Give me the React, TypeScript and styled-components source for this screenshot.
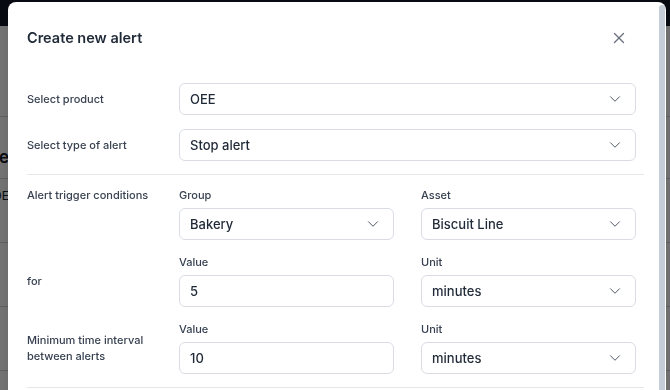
import React from 'react';
import styled, { createGlobalStyle } from 'styled-components';
import { ChevronDown, X } from 'lucide-react';

const GlobalStyle = createGlobalStyle`
  html, body {
    margin: 0;
    padding: 0;
    height: 100%;
    overflow: hidden;
    background: #ffffff;
    font-family: Inter, "Noto Sans", sans-serif;
  }
`;

const Page = styled.div`
  height: 390px;
  display: flex;
  flex-direction: column;
`;

const Navbar = styled.div`
  height: 26px;
  flex-shrink: 0;
  background: #111827;
`;

const Toolbar = styled.div`
  height: 90px;
  border-bottom: 1px solid #d1d5db;
`;

const TitleRow = styled.div`
  height: 62px;
  display: flex;
  align-items: flex-end;
  padding-bottom: 11px;
  box-sizing: border-box;
  border-bottom: 1px solid #d1d5db;
`;

const TableRow = styled.div`
  height: 64px;
  padding-top: 9px;
  box-sizing: border-box;
  border-bottom: 1px solid #d1d5db;
`;

const Clip = styled.div<{ $size: number; $weight: number }>`
  width: 9px;
  overflow: hidden;
  display: flex;
  justify-content: flex-end;
  white-space: nowrap;
  font-size: ${p => p.$size}px;
  font-weight: ${p => p.$weight};
  color: #111827;
`;

const Backdrop = styled.div`
  position: fixed;
  inset: 0;
  background: rgba(0, 0, 0, 0.52);
`;

const ModalFrame = styled.div`
  position: absolute;
  top: 2px;
  left: 8px;
  width: 658px;
  height: 430px;
  display: flex;
  background: #ffffff;
  border-radius: 8px;
  overflow: hidden;
  box-shadow: 0 10px 25px rgba(0, 0, 0, 0.2);
`;

const ModalScroll = styled.div`
  flex: 1;
  min-width: 0;
  height: 100%;
  overflow-y: auto;
  scrollbar-width: none;
  &::-webkit-scrollbar {
    display: none;
  }
`;

const ScrollTrack = styled.div`
  flex: 0 0 8px;
  width: 8px;
  box-sizing: border-box;
  padding: 3px 1px 0 1px;
  display: flex;
  flex-direction: column;
`;

const ScrollThumb = styled.div`
  width: 6px;
  height: 400px;
  flex-shrink: 0;
  border-radius: 3px;
  background: #c5cdd8;
`;

const Header = styled.div`
  display: flex;
  align-items: center;
  justify-content: space-between;
  padding: 25px 14px 0 19px;
`;

const Title = styled.h2`
  margin: 0;
  font-size: 14.5px;
  line-height: 22px;
  font-weight: 600;
  color: #1f2937;
`;

const CloseButton = styled.button`
  border: none;
  background: none;
  padding: 0;
  margin-right: 15px;
  width: 20px;
  height: 20px;
  display: flex;
  align-items: center;
  justify-content: center;
  color: #6b7280;
  cursor: pointer;
`;

const Body = styled.div`
  padding: 34px 14px 0 19px;
  display: flex;
  flex-direction: column;
`;

const Section = styled.div`
  display: flex;
  flex-direction: column;
  gap: 14px;
`;

const Row = styled.div<{ $top?: boolean }>`
  display: grid;
  grid-template-columns: 125px 215px 215px;
  column-gap: 27px;
  align-items: ${p => (p.$top ? 'start' : 'center')};
`;

const RowLabel = styled.div`
  font-size: 11px;
  line-height: 16px;
  font-weight: 500;
  color: #374151;
`;

const Field = styled.div<{ $wide?: boolean }>`
  display: flex;
  flex-direction: column;
  gap: 5px;
  grid-column: ${p => (p.$wide ? '2 / 4' : 'auto')};
`;

const FieldLabel = styled.label`
  font-size: 11px;
  line-height: 16px;
  font-weight: 500;
  color: #374151;
`;

const SelectBox = styled.button`
  height: 32px;
  box-sizing: border-box;
  width: 100%;
  display: flex;
  align-items: center;
  justify-content: space-between;
  padding: 0 11px 0 10px;
  border: 1px solid #d9dde3;
  border-radius: 6px;
  background: #ffffff;
  font-family: Inter, "Noto Sans", sans-serif;
  font-size: 13px;
  font-weight: 500;
  color: #1f2937;
  text-align: left;
  cursor: pointer;

  svg {
    color: #4b5563;
  }
`;

const TextInput = styled.input`
  height: 32px;
  box-sizing: border-box;
  width: 100%;
  padding: 0 10px;
  border: 1px solid #d9dde3;
  border-radius: 6px;
  font-family: Inter, "Noto Sans", sans-serif;
  font-size: 13px;
  font-weight: 500;
  color: #1f2937;
  outline: none;
`;

const Divider = styled.hr`
  border: none;
  border-top: 1px solid #e5e7eb;
  margin: 13px 0 12px;
`;

const Footer = styled.div`
  display: flex;
  justify-content: flex-end;
  gap: 10px;
  padding: 2px 0 24px;
`;

const Button = styled.button<{ $primary?: boolean }>`
  height: 32px;
  padding: 0 14px;
  border-radius: 6px;
  font-family: Inter, "Noto Sans", sans-serif;
  font-size: 13px;
  border: 1px solid ${p => (p.$primary ? '#111827' : '#d9dde3')};
  background: ${p => (p.$primary ? '#111827' : '#ffffff')};
  color: ${p => (p.$primary ? '#ffffff' : '#1f2937')};
`;

const Select = ({ value }: { value: string }) => (
  <SelectBox type="button">
    <span>{value}</span>
    <ChevronDown size={18} strokeWidth={1.3} />
  </SelectBox>
);

export default function App() {
  return (
    <>
      <GlobalStyle />
      <Page>
        <Navbar />
        <Toolbar />
        <TitleRow>
          <Clip $size={17} $weight={600}>Table</Clip>
        </TitleRow>
        <TableRow>
          <Clip $size={12} $weight={400}>OE</Clip>
        </TableRow>
        <TableRow />
        <TableRow />
      </Page>
      <Backdrop />
      <ModalFrame>
        <ModalScroll>
          <Header>
            <Title>Create new alert</Title>
            <CloseButton type="button" aria-label="Close">
              <X size={18} strokeWidth={1.8} />
            </CloseButton>
          </Header>
          <Body>
            <Section>
              <Row>
                <RowLabel>Select product</RowLabel>
                <Field $wide>
                  <Select value="OEE" />
                </Field>
              </Row>
              <Row>
                <RowLabel>Select type of alert</RowLabel>
                <Field $wide>
                  <Select value="Stop alert" />
                </Field>
              </Row>
            </Section>
            <Divider />
            <Section>
              <Row $top>
                <RowLabel>Alert trigger conditions</RowLabel>
                <Field>
                  <FieldLabel>Group</FieldLabel>
                  <Select value="Bakery" />
                </Field>
                <Field>
                  <FieldLabel>Asset</FieldLabel>
                  <Select value="Biscuit Line" />
                </Field>
              </Row>
              <Row>
                <RowLabel>for</RowLabel>
                <Field>
                  <FieldLabel>Value</FieldLabel>
                  <TextInput defaultValue="5" />
                </Field>
                <Field>
                  <FieldLabel>Unit</FieldLabel>
                  <Select value="minutes" />
                </Field>
              </Row>
              <Row>
                <RowLabel>
                  Minimum time interval
                  <br />
                  between alerts
                </RowLabel>
                <Field>
                  <FieldLabel>Value</FieldLabel>
                  <TextInput defaultValue="10" />
                </Field>
                <Field>
                  <FieldLabel>Unit</FieldLabel>
                  <Select value="minutes" />
                </Field>
              </Row>
            </Section>
            <Divider />
            <Footer>
              <Button type="button">Cancel</Button>
              <Button type="button" $primary>
                Create alert
              </Button>
            </Footer>
          </Body>
        </ModalScroll>
        <ScrollTrack>
          <ScrollThumb />
        </ScrollTrack>
      </ModalFrame>
    </>
  );
}
